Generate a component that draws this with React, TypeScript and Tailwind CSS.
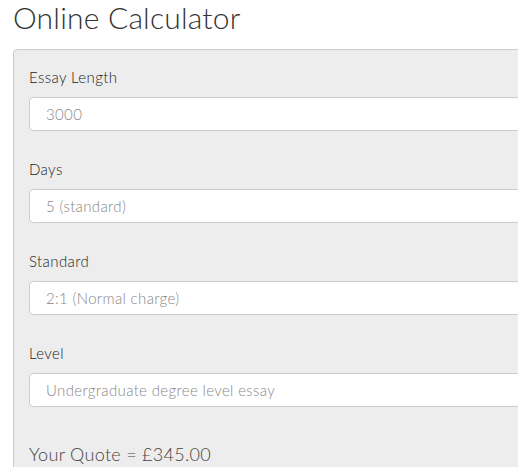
import React from "react";

const fields = [
  { label: "Essay Length", value: "3000" },
  { label: "Days", value: "5 (standard)" },
  { label: "Standard", value: "2:1 (Normal charge)" },
  { label: "Level", value: "Undergraduate degree level essay" },
];

export default function App() {
  return (
    <div
      className="w-[518px] h-[467px] overflow-hidden bg-white text-[#333]"
      style={{ fontFamily: "Lato, 'Open Sans', sans-serif" }}
    >
      <h1 className="ml-[13px] text-[30px] leading-[34px] font-light tracking-[0.2px] text-[#333]">
        Online Calculator
      </h1>
      <div className="ml-[13px] mt-[15px] w-[600px] h-[500px] rounded-[4px] border border-[#ccc] bg-[#ededed] pl-[15px] pt-[17px]">
        {fields.map((f) => (
          <div key={f.label} className="mb-[28px]">
            <div className="h-[21px] text-[15px] leading-[21px] font-light tracking-[0.4px] text-[#222]">
              {f.label}
            </div>
            <div className="mt-[9px] flex h-[34px] w-[560px] items-center rounded-[4px] border border-[#ccc] bg-white pl-[16px] text-[15px] font-light tracking-[0.35px] text-[#888]">
              {f.value}
            </div>
          </div>
        ))}
        <div className="mt-[34px] text-[18px] leading-[26px] font-light tracking-[0.3px] text-[#444]">
          Your Quote = £345.00
        </div>
      </div>
    </div>
  );
}
